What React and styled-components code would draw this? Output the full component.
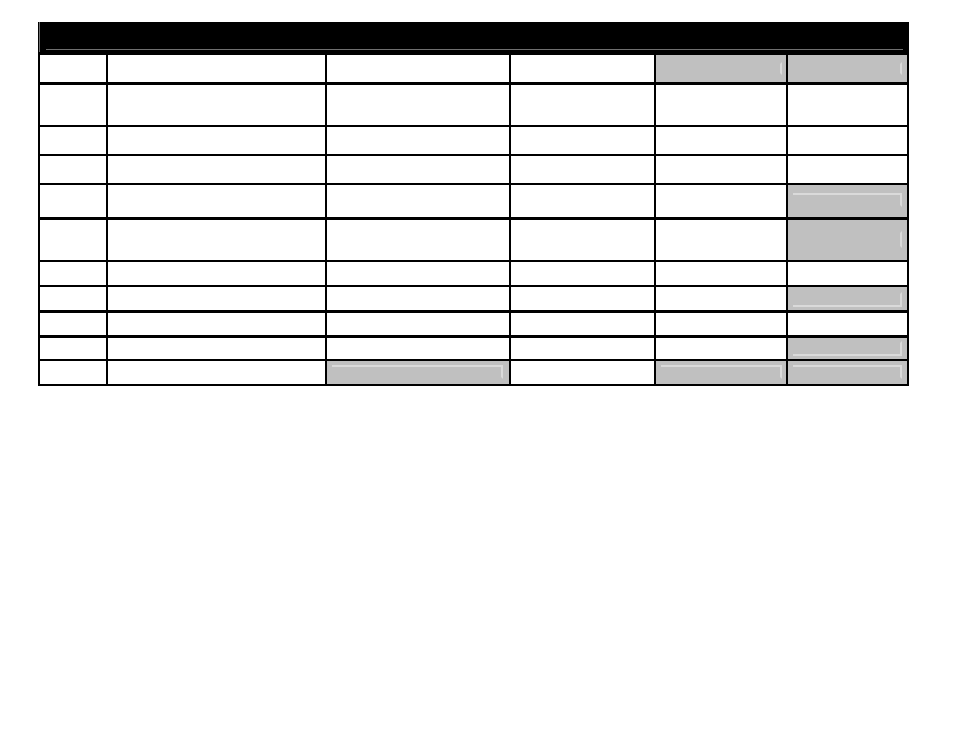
import styled, { createGlobalStyle } from "styled-components";

const GlobalStyle = createGlobalStyle`
  html, body {
    margin: 0;
    padding: 0;
    background: #ffffff;
    font-family: "Liberation Sans", Arial, sans-serif;
  }
`;

const COLUMNS = "68px 219px 184px 145px 132px 121px";

// each row: content height, bottom border width, grey cells keyed by column
// index with the sides of the faint inner frame that still show
const rows = [
  { h: 27, line: 3, grey: { 4: { r: 1, pad: "7px 4px 7px 6px" }, 5: { r: 1, pad: "7px 5px 7px 6px" } } },
  { h: 40, line: 2, grey: {} },
  { h: 27, line: 2, grey: {} },
  { h: 27, line: 2, grey: {} },
  { h: 32, line: 3, grey: { 5: { t: 1, r: 1, pad: "8px 5px 10px 5px" } } },
  { h: 40, line: 2, grey: { 5: { r: 1, pad: "11px 5px 12px 5px" } } },
  { h: 23, line: 2, grey: {} },
  { h: 23, line: 3, grey: { 5: { b: 1, r: 1, pad: "5px 5px 3px 5px" } } },
  { h: 22, line: 3, grey: {} },
  { h: 21, line: 2, grey: { 5: { b: 1, r: 1, pad: "3px 5px 3px 5px" } } },
  {
    h: 23,
    line: 2,
    grey: {
      2: { t: 1, r: 1, pad: "4px 6px 5px 5px" },
      4: { t: 1, r: 1, pad: "4px 4px 5px 5px" },
      5: { t: 1, r: 1, pad: "4px 5px 5px 5px" },
    },
  },
];

const App = () => {
  return (
    <Page>
      <GlobalStyle />
      <Sheet>
        <Header>
          <HeaderFrame>
            <HeaderRule />
          </HeaderFrame>
        </Header>
        {rows.map((row, i) => (
          <Row key={i} $h={row.h} $line={row.line}>
            {[0, 1, 2, 3, 4, 5].map((c) => {
              const g = row.grey[c];
              return (
                <Cell key={c} $grey={!!g} $pad={g ? g.pad : "0"}>
                  {g && <Inset $t={g.t} $r={g.r} $b={g.b} />}
                </Cell>
              );
            })}
          </Row>
        ))}
      </Sheet>
    </Page>
  );
};

const Page = styled.div`
  padding: 22px 0 0 38px;
  min-height: 738px;
  box-sizing: border-box;
`;

const Sheet = styled.div`
  width: 871px;
  display: flex;
  flex-direction: column;
`;

const Header = styled.div`
  height: 33px;
  background: #000000;
  padding: 0 6px 3px 1px;
  box-sizing: border-box;
  display: flex;
`;

const HeaderFrame = styled.div`
  flex: 1;
  border-left: 1px solid #6f6f6f;
  padding-left: 6px;
  display: flex;
  flex-direction: column;
`;

const HeaderRule = styled.div`
  height: 27px;
  border-bottom: 1px solid #6f6f6f;
`;

const Row = styled.div`
  display: grid;
  grid-template-columns: ${COLUMNS};
  height: ${(p) => p.$h + p.$line}px;
  border-left: 2px solid #000000;
  border-bottom: ${(p) => p.$line}px solid #000000;
  box-sizing: content-box;
  width: 869px;
  height: ${(p) => p.$h}px;
`;

const Cell = styled.div`
  border-right: 2px solid #000000;
  background: ${(p) => (p.$grey ? "#c0c0c0" : "#ffffff")};
  padding: ${(p) => p.$pad};
  display: flex;
  box-sizing: border-box;
  min-width: 0;
`;

const Inset = styled.div`
  flex: 1;
  border-top: 2px solid ${(p) => (p.$t ? "#dadada" : "transparent")};
  border-right: 2px solid ${(p) => (p.$r ? "#dadada" : "transparent")};
  border-bottom: 2px solid ${(p) => (p.$b ? "#dadada" : "transparent")};
`;

export default App;
